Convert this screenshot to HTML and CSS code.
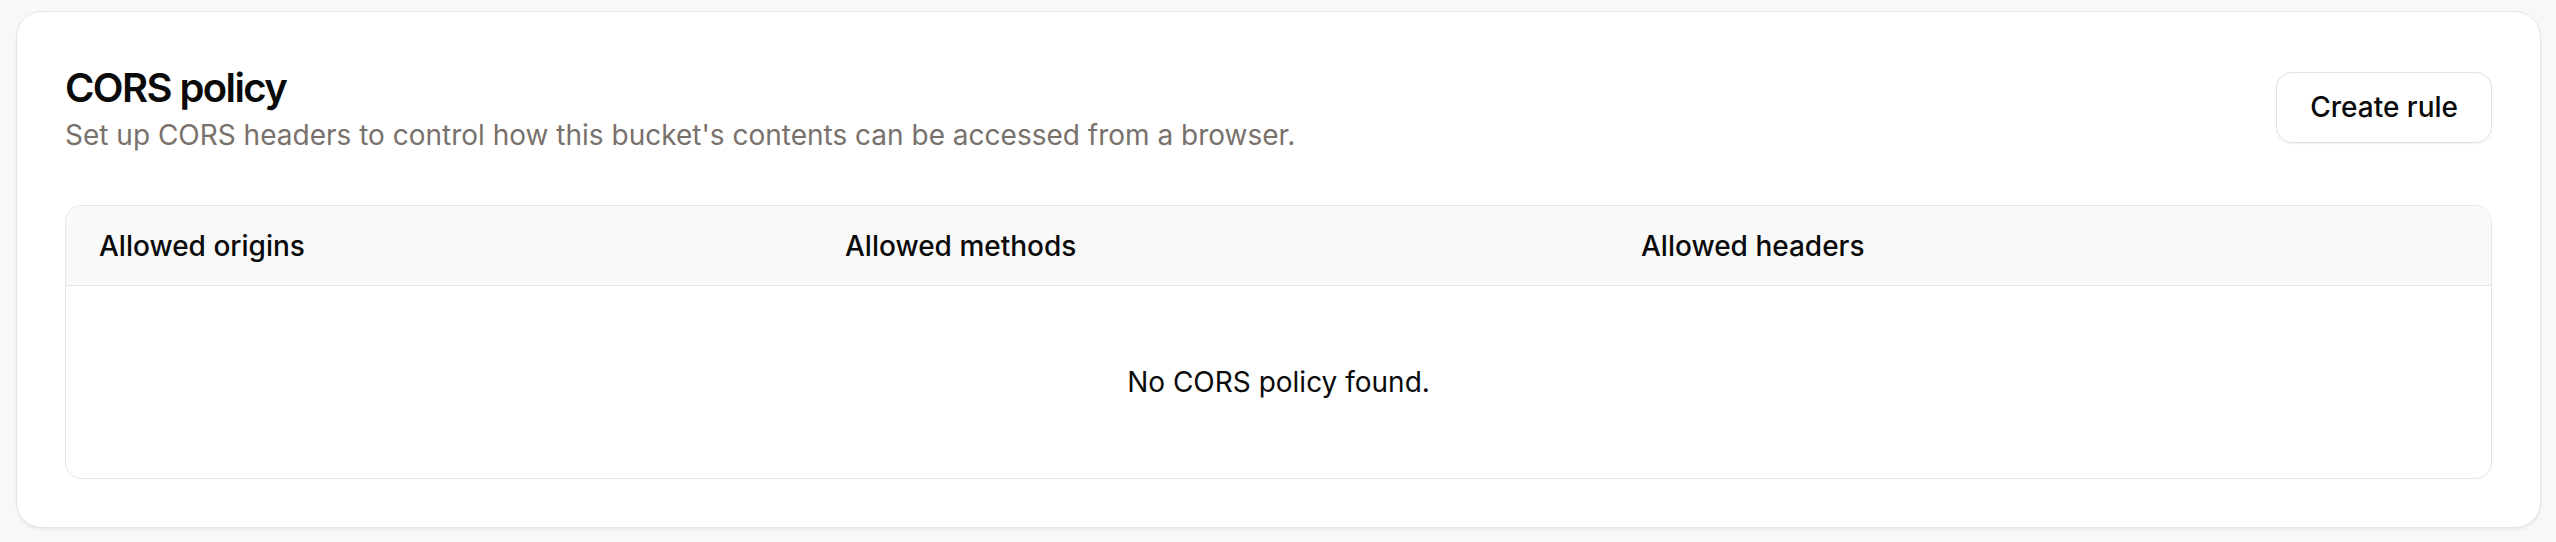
FILE: index.html
```html
<!DOCTYPE html>
<html lang="en">
<head>
<meta charset="utf-8">
<title>CORS policy</title>
<link rel="stylesheet" href="styles.css">
</head>
<body>
  <main class="page">
    <section class="card">
      <header class="card-header">
        <div class="heading">
          <h2 class="title">CORS policy</h2>
          <p class="subtitle">Set up CORS headers to control how this bucket's contents can be accessed from a browser.</p>
        </div>
        <button class="btn" type="button">Create rule</button>
      </header>
      <div class="table">
        <div class="table-head">
          <div class="th">Allowed origins</div>
          <div class="th">Allowed methods</div>
          <div class="th">Allowed headers</div>
        </div>
        <div class="table-empty">No CORS policy found.</div>
      </div>
    </section>
  </main>
</body>
</html>
```

FILE: styles.css
```css
* { box-sizing: border-box; }

html, body {
  margin: 0;
  padding: 0;
  background: #f8f8f8;
  font-family: Inter, "Noto Sans", "Liberation Sans", sans-serif;
  color: #0a0a0a;
}

.page {
  padding: 11px 15px 14px 16px;
}

.card {
  background: #ffffff;
  border: 1px solid #e6e6e6;
  border-radius: 26px;
  box-shadow: 0 2px 3px rgba(0, 0, 0, 0.06);
  padding: 48px;
  height: 517px;
  display: flex;
  flex-direction: column;
  gap: 51px;
}

.card-header {
  display: flex;
  align-items: center;
  justify-content: space-between;
}

.heading {
  display: flex;
  flex-direction: column;
}

.title {
  margin: 0;
  font-size: 40px;
  line-height: 56px;
  font-weight: 600;
  letter-spacing: -0.04em;
  color: #0a0a0a;
}

.subtitle {
  margin: 0;
  font-size: 28px;
  line-height: 38px;
  color: #78716c;
}

.btn {
  height: 71px;
  padding: 0 33px;
  border: 1px solid #e2e2e2;
  border-radius: 16px;
  background: #ffffff;
  box-shadow: 0 1px 2px rgba(0, 0, 0, 0.06);
  font-family: inherit;
  font-size: 28px;
  font-weight: 500;
  color: #0a0a0a;
  cursor: pointer;
}

.table {
  flex: 1;
  display: flex;
  flex-direction: column;
  border: 1px solid #e5e5e5;
  border-radius: 16px;
  overflow: hidden;
}

.table-head {
  display: grid;
  grid-template-columns: 746px 796px 1fr;
  height: 80px;
  background: #f9f9f9;
  border-bottom: 1px solid #e5e5e5;
}

.th {
  display: flex;
  align-items: center;
  padding: 0 33px;
  font-size: 28px;
  font-weight: 500;
  color: #0a0a0a;
}

.table-empty {
  flex: 1;
  display: flex;
  align-items: center;
  justify-content: center;
  font-size: 28px;
  color: #0a0a0a;
}
```
